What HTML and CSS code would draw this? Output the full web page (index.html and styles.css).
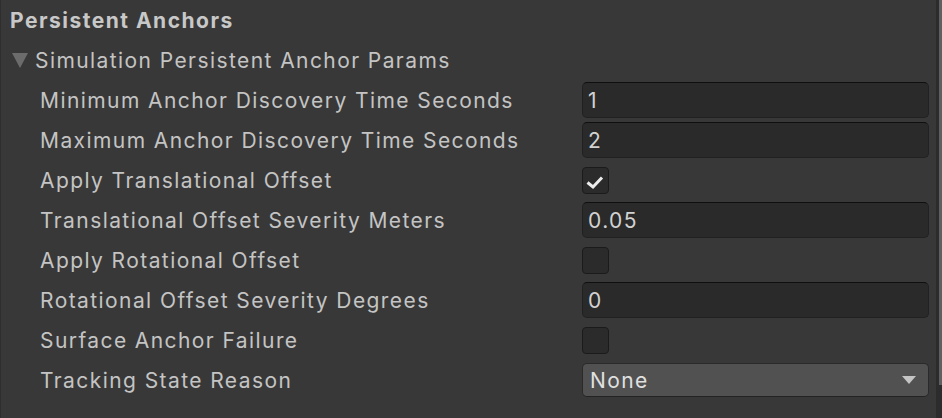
FILE: index.html
```html
<!DOCTYPE html>
<html>
<head>
	<title>Persistent Anchors</title>
	<link rel="stylesheet" href="styles.css">
</head>
<body>
	<div class="inspector">
		<div class="panel">
			<div class="header">Persistent Anchors</div>
			<div class="foldout">
				<svg class="fold-arrow" width="16" height="15" viewBox="0 0 16 15"><polygon points="0,0 16,0 8,15" fill="#6c6c6c"/></svg>
				<span>Simulation Persistent Anchor Params</span>
			</div>
			<div class="props">
				<div class="label">Minimum Anchor Discovery Time Seconds</div>
				<div class="field">1</div>

				<div class="label">Maximum Anchor Discovery Time Seconds</div>
				<div class="field">2</div>

				<div class="label">Apply Translational Offset</div>
				<div class="ctrl"><span class="check on">
					<svg width="27" height="27" viewBox="0 0 27 27"><polyline points="5.5,15.5 11,20 20,10.5" fill="none" stroke="#ececec" stroke-width="3" stroke-linejoin="miter" stroke-linecap="butt"/></svg>
				</span></div>

				<div class="label">Translational Offset Severity Meters</div>
				<div class="field">0.05</div>

				<div class="label">Apply Rotational Offset</div>
				<div class="ctrl"><span class="check"></span></div>

				<div class="label">Rotational Offset Severity Degrees</div>
				<div class="field">0</div>

				<div class="label">Surface Anchor Failure</div>
				<div class="ctrl"><span class="check"></span></div>

				<div class="label">Tracking State Reason</div>
				<div class="popup">
					<span>None</span>
					<svg width="14" height="8" viewBox="0 0 14 8"><polygon points="0,0 14,0 7,8" fill="#c4c4c4"/></svg>
				</div>
			</div>
		</div>
		<div class="scrollbar"><div class="thumb"></div></div>
	</div>
</body>
</html>
```

FILE: styles.css
```css
html, body {
	margin: 0;
	padding: 0;
	background: #383838;
}

body {
	font-family: Inter, "Noto Sans", sans-serif;
	color: #c4c4c4;
	font-size: 21px;
	letter-spacing: 1.42px;
}

.inspector {
	display: flex;
	width: 942px;
	height: 418px;
	border-left: 1px solid #2e2e2e;
	box-sizing: border-box;
}

.panel {
	flex: 1;
}

.header {
	height: 40px;
	line-height: 41px;
	padding-left: 9px;
	font-weight: bold;
	color: #c8c8c8;
	letter-spacing: 1.5px;
}

.foldout {
	height: 40px;
	display: flex;
	align-items: center;
	padding-left: 11px;
	gap: 7px;
}

.fold-arrow {
	margin-top: 1px;
}

.props {
	display: grid;
	grid-template-columns: 542px 347px;
	grid-auto-rows: 40px;
	padding-left: 39px;
}

.label {
	display: flex;
	align-items: center;
	white-space: nowrap;
}

.field {
	align-self: center;
	height: 36px;
	box-sizing: border-box;
	background: #2a2a2a;
	border: 1px solid #212121;
	border-top-color: #0f0f0f;
	border-radius: 5px;
	padding-left: 5px;
	display: flex;
	align-items: center;
	color: #d2d2d2;
}

.ctrl {
	display: flex;
	align-items: center;
}

.check {
	width: 27px;
	height: 27px;
	box-sizing: border-box;
	background: #2b2b2b;
	border: 1px solid #1b1b1b;
	border-radius: 4px;
	position: relative;
}

.check svg {
	position: absolute;
	left: -1px;
	top: -1px;
}

.popup {
	align-self: center;
	height: 34px;
	box-sizing: border-box;
	background: #515151;
	border: 1px solid #2a2a2a;
	border-bottom-color: #232323;
	border-radius: 5px;
	display: flex;
	align-items: center;
	justify-content: space-between;
	padding: 0 12px 0 7px;
	color: #e0e0e0;
}

.scrollbar {
	width: 6px;
	margin-left: 7px;
	border-left: 3px solid #2c2c2c;
	box-sizing: border-box;
	background: #2c2c2c;
}

.thumb {
	height: 385px;
	background: #5f5f5f;
}
```
